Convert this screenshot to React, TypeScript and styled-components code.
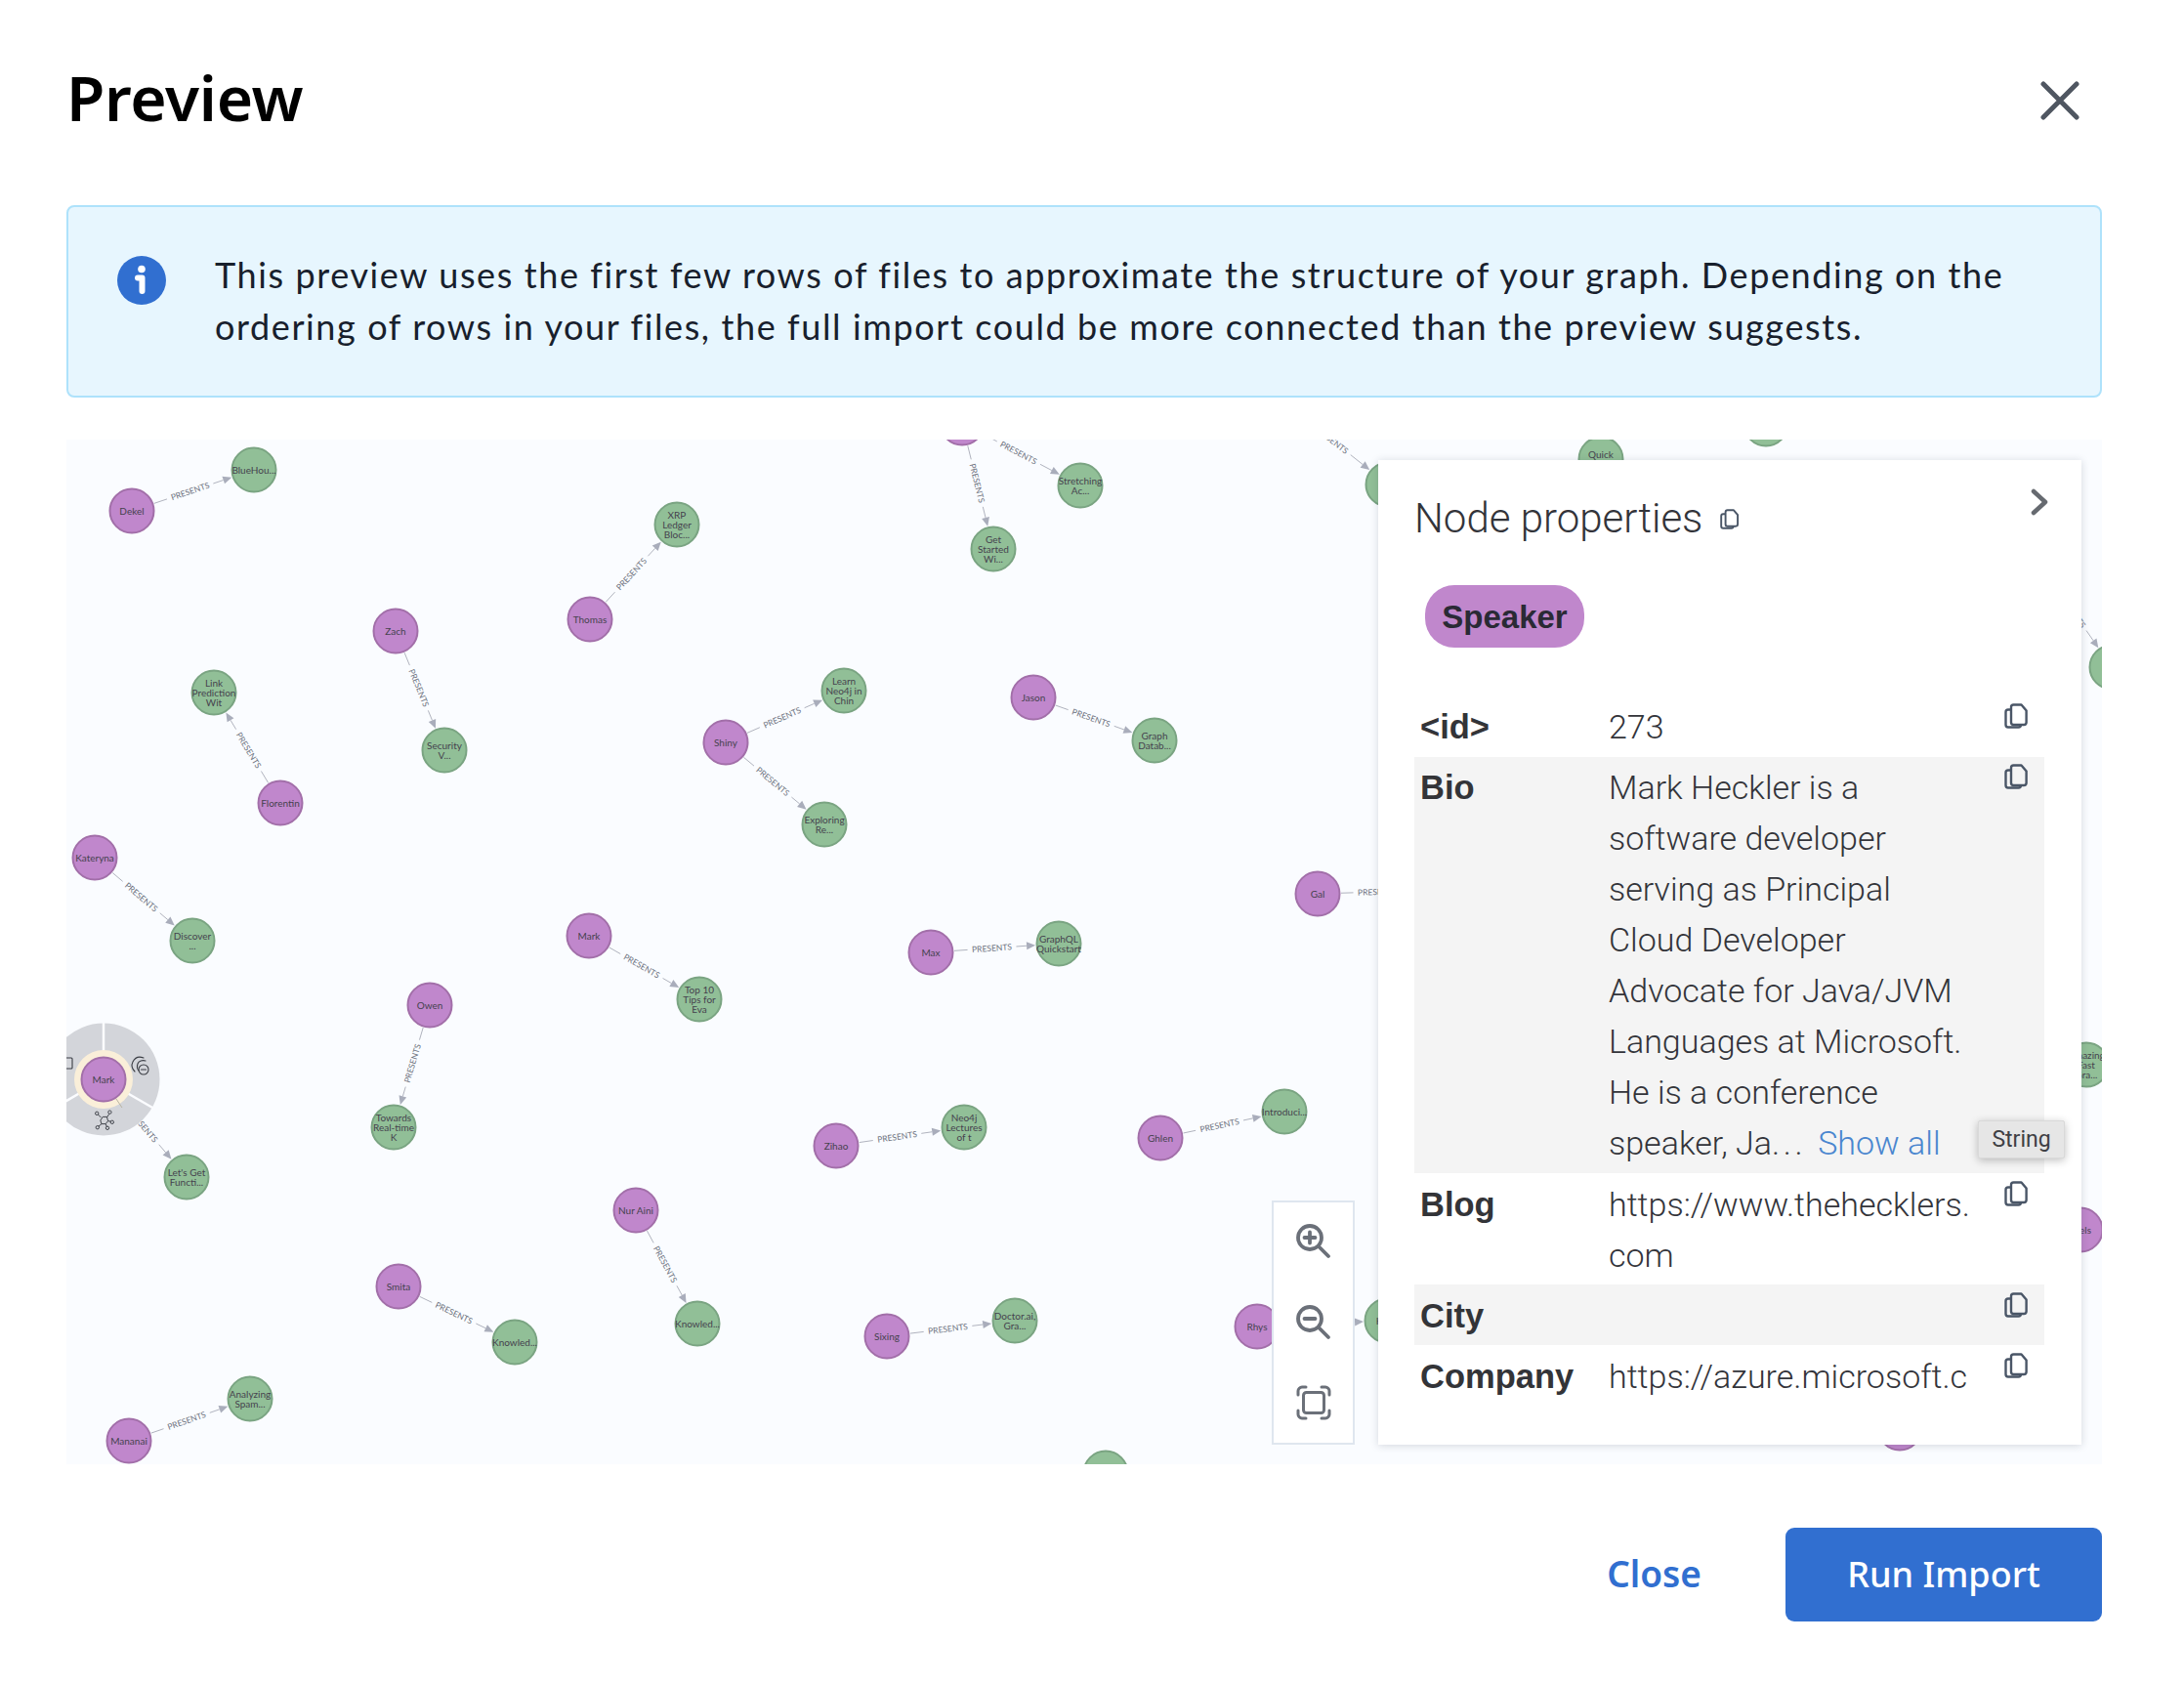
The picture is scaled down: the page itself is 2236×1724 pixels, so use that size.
import React from "react";
import styled, { createGlobalStyle } from "styled-components";

type Kind = "speaker" | "talk";

interface GraphNode {
  x: number;
  y: number;
  kind: Kind;
  lines: string[];
}

// positions are page pixels, the svg viewBox starts at the canvas corner
const NODES: Record<string, GraphNode> = {
  dekel: { x: 135, y: 523, kind: "speaker", lines: ["Dekel"] },
  bluehou: { x: 260, y: 481, kind: "talk", lines: ["BlueHou..."] },
  thomas: { x: 604, y: 634, kind: "speaker", lines: ["Thomas"] },
  xrp: { x: 693, y: 537, kind: "talk", lines: ["XRP", "Ledger", "Bloc..."] },
  zach: { x: 405, y: 646, kind: "speaker", lines: ["Zach"] },
  security: { x: 455, y: 768, kind: "talk", lines: ["Security", "V..."] },
  florentin: { x: 287, y: 822, kind: "speaker", lines: ["Florentin"] },
  link: { x: 219, y: 709, kind: "talk", lines: ["Link", "Prediction", "Wit"] },
  kateryna: { x: 97, y: 878, kind: "speaker", lines: ["Kateryna"] },
  discover: { x: 197, y: 963, kind: "talk", lines: ["Discover", "..."] },
  shiny: { x: 743, y: 760, kind: "speaker", lines: ["Shiny"] },
  learn: { x: 864, y: 707, kind: "talk", lines: ["Learn", "Neo4j in", "Chin"] },
  exploring: { x: 844, y: 844, kind: "talk", lines: ["Exploring", "Re..."] },
  jason: { x: 1058, y: 714, kind: "speaker", lines: ["Jason"] },
  graph: { x: 1182, y: 758, kind: "talk", lines: ["Graph", "Datab..."] },
  topSpeaker: { x: 985, y: 433, kind: "speaker", lines: [] },
  stretching: { x: 1106, y: 497, kind: "talk", lines: ["Stretching", "Ac..."] },
  started: { x: 1017, y: 562, kind: "talk", lines: ["Get", "Started", "Wi..."] },
  gal: { x: 1349, y: 915, kind: "speaker", lines: ["Gal"] },
  galTalk: { x: 1478, y: 911, kind: "talk", lines: [] },
  max: { x: 953, y: 975, kind: "speaker", lines: ["Max"] },
  graphql: { x: 1084, y: 966, kind: "talk", lines: ["GraphQL", "Quickstart"] },
  mark: { x: 603, y: 958, kind: "speaker", lines: ["Mark"] },
  top10: { x: 716, y: 1023, kind: "talk", lines: ["Top 10", "Tips for", "Eva"] },
  owen: { x: 440, y: 1029, kind: "speaker", lines: ["Owen"] },
  towards: { x: 403, y: 1154, kind: "talk", lines: ["Towards", "Real-time", "K"] },
  functional: { x: 191, y: 1205, kind: "talk", lines: ["Let's Get", "Functi..."] },
  zihao: { x: 856, y: 1173, kind: "speaker", lines: ["Zihao"] },
  lectures: { x: 987, y: 1154, kind: "talk", lines: ["Neo4j", "Lectures", "of t"] },
  ghlen: { x: 1188, y: 1165, kind: "speaker", lines: ["Ghlen"] },
  introduci: { x: 1315, y: 1138, kind: "talk", lines: ["Introduci..."] },
  nurAini: { x: 651, y: 1239, kind: "speaker", lines: ["Nur Aini"] },
  knowledA: { x: 714, y: 1355, kind: "talk", lines: ["Knowled..."] },
  smita: { x: 408, y: 1317, kind: "speaker", lines: ["Smita"] },
  knowledB: { x: 527, y: 1374, kind: "talk", lines: ["Knowled..."] },
  sixing: { x: 908, y: 1368, kind: "speaker", lines: ["Sixing"] },
  doctor: { x: 1039, y: 1352, kind: "talk", lines: ["Doctor.ai,", "Gra..."] },
  mananai: { x: 132, y: 1475, kind: "speaker", lines: ["Mananai"] },
  analyzing: { x: 256, y: 1432, kind: "talk", lines: ["Analyzing", "Spam..."] },
  rhys: { x: 1287, y: 1358, kind: "speaker", lines: ["Rhys"] },
  hidden: { x: 1420, y: 1352, kind: "talk", lines: ["Hid..."] },
  hyperSource: { x: 1310, y: 408, kind: "speaker", lines: [] },
  hyper: { x: 1421, y: 496, kind: "talk", lines: ["Hy..."] },
  quick: { x: 1639, y: 470, kind: "talk", lines: ["Quick", "Tour"] },
  topTalk: { x: 1808, y: 434, kind: "talk", lines: [] },
  rightSource: { x: 2085, y: 572, kind: "speaker", lines: [] },
  rightTalk: { x: 2162, y: 683, kind: "talk", lines: ["Intro"] },
  amazing: { x: 2136, y: 1090, kind: "talk", lines: ["Amazing", "Fast", "Gra..."] },
  niels: { x: 2130, y: 1259, kind: "speaker", lines: ["Niels"] },
  bottomTalk: { x: 1132, y: 1508, kind: "talk", lines: [] },
  bottomSpeaker: { x: 1945, y: 1462, kind: "speaker", lines: [] },
};

const EDGES: [string, string][] = [
  ["dekel", "bluehou"],
  ["thomas", "xrp"],
  ["zach", "security"],
  ["florentin", "link"],
  ["kateryna", "discover"],
  ["shiny", "learn"],
  ["shiny", "exploring"],
  ["jason", "graph"],
  ["topSpeaker", "stretching"],
  ["topSpeaker", "started"],
  ["gal", "galTalk"],
  ["max", "graphql"],
  ["mark", "top10"],
  ["owen", "towards"],
  ["zihao", "lectures"],
  ["ghlen", "introduci"],
  ["nurAini", "knowledA"],
  ["smita", "knowledB"],
  ["sixing", "doctor"],
  ["mananai", "analyzing"],
  ["rhys", "hidden"],
  ["hyperSource", "hyper"],
  ["rightSource", "rightTalk"],
];

const SELECTED = { x: 106, y: 1105 };
const SELECTED_TALK = NODES.functional;

const Relationship: React.FC<{ from: { x: number; y: number }; to: { x: number; y: number } }> = ({ from, to }) => {
  const dx = to.x - from.x;
  const dy = to.y - from.y;
  const len = Math.hypot(dx, dy);
  const ux = dx / len;
  const uy = dy / len;
  const sx = from.x + ux * 24;
  const sy = from.y + uy * 24;
  const tx = to.x - ux * 24;
  const ty = to.y - uy * 24;
  const ax = tx - ux * 9;
  const ay = ty - uy * 9;
  const mx = (sx + ax) / 2 + ux * 1.5;
  const my = (sy + ay) / 2 + uy * 1.5;
  const gap = 25;
  let angle = (Math.atan2(dy, dx) * 180) / Math.PI;
  if (angle > 90) angle -= 180;
  if (angle < -90) angle += 180;

  return (
    <g>
      <EdgeLine x1={sx} y1={sy} x2={mx - ux * gap} y2={my - uy * gap} />
      <EdgeLine x1={mx + ux * gap} y1={my + uy * gap} x2={ax} y2={ay} />
      <EdgeArrow
        points={`${tx},${ty} ${ax - uy * 4},${ay + ux * 4} ${ax + uy * 4},${ay - ux * 4}`}
      />
      <EdgeLabel x={mx} y={my} transform={`rotate(${angle} ${mx} ${my})`}>
        PRESENTS
      </EdgeLabel>
    </g>
  );
};

const Node: React.FC<{ node: GraphNode }> = ({ node }) => {
  const first = node.y - ((node.lines.length - 1) * 9.6) / 2;
  return (
    <g>
      <NodeCircle $kind={node.kind} cx={node.x} cy={node.y} r={22.5} />
      <NodeLabel>
        {node.lines.map((line, i) => (
          <tspan key={i} x={node.x} y={first + i * 9.6}>
            {line}
          </tspan>
        ))}
      </NodeLabel>
    </g>
  );
};

const SelectedMenu: React.FC = () => {
  const { x, y } = SELECTED;
  const spokes = [-90, 30, 150];
  return (
    <g>
      <circle cx={x} cy={y} r={57.5} fill="#d3d5da" />
      {spokes.map((deg) => {
        const rad = (deg * Math.PI) / 180;
        return (
          <line
            key={deg}
            x1={x + Math.cos(rad) * 28}
            y1={y + Math.sin(rad) * 28}
            x2={x + Math.cos(rad) * 59}
            y2={y + Math.sin(rad) * 59}
            stroke="#fbfcff"
            strokeWidth={2.5}
          />
        );
      })}
      <circle cx={x} cy={y} r={30} fill="#faefd9" />
      <line x1={x + 13} y1={y + 20} x2={x + 19} y2={y + 29} stroke="#b9b4a2" strokeWidth={1} />
      <Node node={{ x, y, kind: "speaker", lines: ["Mark"] }} />
      {/* dismiss */}
      <g fill="none" stroke="#3a3d44" strokeWidth={1.1} strokeLinecap="round">
        <path d="M147 1083c-5-2-9 0-11 4s-1 7 2 10" />
        <path d="M149 1086c-3-1-7 0-8 3s-1 5 1 7" />
        <circle cx={147} cy={1095} r={5} />
        <path d="M144.500 1095h5" />
      </g>
      {/* expand */}
      <g fill="none" stroke="#3a3d44" strokeWidth={1.6} transform="translate(107 1147) scale(0.6) translate(-109 -1146)">
        <path d="M106 1140l7 0 2 7-4 5-7 0-2-6z" />
        <path d="M103 1141l-5-5M113 1141l4-6M115 1147l5 1M111 1152l2 5M104 1152l-5 4" />
        <circle cx={96} cy={1134} r={2.8} />
        <circle cx={118} cy={1132} r={2.8} />
        <circle cx={122} cy={1149} r={2.8} />
        <circle cx={114} cy={1159} r={2.8} />
        <circle cx={97} cy={1158} r={2.8} />
      </g>
      {/* lock */}
      <rect x={66} y={1083} width={8} height={11} rx={1} fill="none" stroke="#3a3d44" strokeWidth={1.1} />
    </g>
  );
};

const CopyGlyph: React.FC = () => (
  <CopyIcon viewBox="0 0 25 26" fill="none" stroke="currentColor" strokeWidth={2.4} strokeLinejoin="round">
    <path d="M7 6.5V19.500c0 1.600 1 2.500 2.500 2.500H20c1.600 0 2.600-1 2.600-2.500V7.500L17.500 1.500H9.500C8 1.500 7 2.500 7 4z" />
    <path d="M7 6.500H4C2.500 6.500 1.500 7.500 1.500 9v13c0 1.500 1 2.500 2.500 2.500h10.500c1.500 0 2.500-1 2.500-2.500" />
  </CopyIcon>
);

const ROWS = [
  { key: "<id>", value: ["273"] },
  {
    key: "Bio",
    value: [
      "Mark Heckler is a",
      "software developer",
      "serving as Principal",
      "Cloud Developer",
      "Advocate for Java/JVM",
      "Languages at Microsoft.",
      "He is a conference",
    ],
    more: true,
  },
  { key: "Blog", value: ["https://www.thehecklers.", "com"] },
  { key: "City", value: [""] },
  { key: "Company", value: ["https://azure.microsoft.c"] },
];

const App: React.FC = () => {
  return (
    <>
      <GlobalStyle />
      <Modal>
        <Header>
          <Title>Preview</Title>
          <CloseIcon type="button" aria-label="Close">
            <svg width="40" height="40" viewBox="0 0 40 40" fill="none" stroke="#4f5661" strokeWidth={5} strokeLinecap="round">
              <path d="M3 3l34 34M37 3L3 37" />
            </svg>
          </CloseIcon>
        </Header>

        <Banner>
          <svg width="50" height="50" viewBox="0 0 50 50">
            <circle cx="25" cy="25" r="25" fill="#316fd0" />
            <circle cx="25" cy="13.500" r="3.800" fill="#fff" />
            <path d="M21 22.500h4.500v13.500" fill="none" stroke="#fff" strokeWidth={6} strokeLinecap="round" strokeLinejoin="round" />
          </svg>
          <BannerText>
            This preview uses the first few rows of files to approximate the structure of your graph. Depending on the
            <br />
            ordering of rows in your files, the full import could be more connected than the preview suggests.
          </BannerText>
        </Banner>

        <Canvas>
          <GraphSvg viewBox="68 450 2084 1049" width="2084" height="1049">
            {EDGES.map(([a, b]) => (
              <Relationship key={a + b} from={NODES[a]} to={NODES[b]} />
            ))}
            <Relationship from={SELECTED} to={SELECTED_TALK} />
            {Object.entries(NODES).map(([id, node]) => (
              <Node key={id} node={node} />
            ))}
            <SelectedMenu />
          </GraphSvg>

          <ZoomBar>
            <svg width="36" height="36" viewBox="0 0 36 36" fill="none" stroke="#6b7079" strokeWidth={3.8} strokeLinecap="round">
              <circle cx="14" cy="14" r="12" />
              <path d="M14 8.500v11M8.500 14h11M23 23l10 10" />
            </svg>
            <svg width="36" height="36" viewBox="0 0 36 36" fill="none" stroke="#6b7079" strokeWidth={3.8} strokeLinecap="round">
              <circle cx="14" cy="14" r="12" />
              <path d="M8.500 14h11M23 23l10 10" />
            </svg>
            <svg width="36" height="36" viewBox="0 0 36 36" fill="none" stroke="#6b7079" strokeWidth={3} strokeLinecap="round">
              <rect x="7.500" y="7.500" width="21" height="21" rx="3" />
              <path d="M2 10V6c0-2 2-4 4-4h4M26 2h4c2 0 4 2 4 4v4M34 26v4c0 2-2 4-4 4h-4M10 34H6c-2 0-4-2-4-4v-4" />
            </svg>
          </ZoomBar>

          <Panel>
            <PanelHeader>
              <PanelTitle>Node properties</PanelTitle>
              <TitleCopy>
                <CopyGlyph />
              </TitleCopy>
              <Chevron viewBox="0 0 18 28" fill="none" stroke="#666a70" strokeWidth={4.500} strokeLinecap="round" strokeLinejoin="round">
                <path d="M3 3l12 11L3 25" />
              </Chevron>
            </PanelHeader>
            <Chip>Speaker</Chip>
            <PropertyTable>
              {ROWS.map((row, index) => (
                <PropertyRow key={row.key} $shaded={index % 2 === 1}>
                  <PropertyKey>{row.key}</PropertyKey>
                  <PropertyValue>
                    {row.value.map((line, i) => (
                      <div key={i}>{line || "\u00a0"}</div>
                    ))}
                    {row.more && (
                      <div>
                        speaker, Ja<Dots>...</Dots>
                        <ShowAll>Show all</ShowAll>
                      </div>
                    )}
                  </PropertyValue>
                  <RowCopy>
                    <CopyGlyph />
                  </RowCopy>
                </PropertyRow>
              ))}
            </PropertyTable>
            <TypeTip>String</TypeTip>
          </Panel>
        </Canvas>

        <Footer>
          <TextButton type="button">Close</TextButton>
          <PrimaryButton type="button">Run Import</PrimaryButton>
        </Footer>
      </Modal>
    </>
  );
};

export default App;

const GlobalStyle = createGlobalStyle`
  html, body {
    margin: 0;
    padding: 0;
    background: #ffffff;
  }
  body {
    font-family: "Lato", "Noto Sans", sans-serif;
  }
`;

const Modal = styled.div`
  width: 2236px;
  height: 1724px;
  box-sizing: border-box;
  padding: 0 84px 0 68px;
  display: flex;
  flex-direction: column;
  overflow: hidden;
`;

const Header = styled.header`
  height: 210px;
  display: flex;
  align-items: flex-start;
  justify-content: space-between;
`;

const Title = styled.h1`
  margin: 56px 0 0;
  font-family: "Noto Sans", sans-serif;
  font-size: 64px;
  line-height: 88px;
  font-weight: 600;
  color: #000000;
  letter-spacing: -0.3px;
`;

const CloseIcon = styled.button`
  margin: 83px 23px 0 0;
  padding: 0;
  border: none;
  background: transparent;
  line-height: 0;
`;

const Banner = styled.section`
  box-sizing: border-box;
  height: 197px;
  display: flex;
  align-items: flex-start;
  gap: 50px;
  padding: 50px 0 0 50px;
  background: #e7f6fe;
  border: 2px solid #aee2fb;
  border-radius: 8px;
`;

const BannerText = styled.p`
  margin: -7px 0 0;
  font-family: "Lato", sans-serif;
  font-size: 36px;
  line-height: 53px;
  color: #18202c;
  white-space: nowrap;
  letter-spacing: 1.6px;
`;

const Canvas = styled.div`
  position: relative;
  margin-top: 43px;
  height: 1049px;
  background: #fafcff;
  overflow: hidden;
`;

const GraphSvg = styled.svg`
  display: block;
`;

const EdgeLine = styled.line`
  stroke: #b0b3be;
  stroke-width: 1;
`;

const EdgeArrow = styled.polygon`
  fill: #a9adbb;
`;

const EdgeLabel = styled.text`
  font-family: "Lato", sans-serif;
  font-size: 8.5px;
  fill: #6d727e;
  text-anchor: middle;
  dominant-baseline: central;
`;

const NodeCircle = styled.circle<{ $kind: Kind }>`
  fill: ${(p) => (p.$kind === "speaker" ? "#c087cc" : "#91bf97")};
  stroke: ${(p) => (p.$kind === "speaker" ? "#a26fa9" : "#7aa482")};
  stroke-width: 2;
`;

const NodeLabel = styled.text`
  font-family: "Lato", sans-serif;
  font-size: 10px;
  fill: #45424e;
  text-anchor: middle;
  dominant-baseline: central;
`;

const ZoomBar = styled.div`
  position: absolute;
  left: 1234px;
  top: 779px;
  box-sizing: border-box;
  width: 85px;
  height: 250px;
  padding: 22px 0 23px;
  display: flex;
  flex-direction: column;
  align-items: center;
  justify-content: space-between;
  background: #ffffff;
  border: 2px solid #dfe6ef;
`;

const Panel = styled.aside`
  position: absolute;
  left: 1343px;
  top: 21px;
  box-sizing: border-box;
  width: 720px;
  height: 1008px;
  padding: 0 38px 0 37px;
  background: #ffffff;
  box-shadow: 0 1px 8px rgba(40, 50, 70, 0.18);
  color: #34353a;
`;

const PanelHeader = styled.div`
  position: relative;
  box-sizing: border-box;
  height: 118px;
  padding-top: 2px;
  display: flex;
  align-items: center;
`;

const PanelTitle = styled.h2`
  margin: 0;
  font-family: "Roboto", sans-serif;
  font-size: 42px;
  line-height: 48px;
  font-weight: 300;
  color: #33343a;
`;

const TitleCopy = styled.span`
  margin-left: 18px;
  width: 20px;
  height: 23px;
  color: #4a5667;
  display: block;
  line-height: 0;
`;

const Chevron = styled.svg`
  position: absolute;
  right: -4px;
  top: 29px;
  width: 18px;
  height: 28px;
`;

const Chip = styled.div`
  display: inline-flex;
  align-items: center;
  justify-content: center;
  box-sizing: border-box;
  margin: 10px 0 0 11px;
  padding-top: 2px;
  width: 163px;
  height: 64px;
  border-radius: 30px;
  background: #c087cc;
  font-family: "Liberation Sans", sans-serif;
  font-size: 33px;
  font-weight: 700;
  color: #2a2a35;
`;

const PropertyTable = styled.div`
  margin-top: 50px;
`;

const PropertyRow = styled.div<{ $shaded: boolean }>`
  display: grid;
  grid-template-columns: 193px 1fr 41px;
  padding: 5px 0 5px 6px;
  background: ${(p) => (p.$shaded ? "#f4f4f4" : "transparent")};

  &:nth-child(n + 3) {
    padding: 6px 0 4px 6px;
  }
`;

const PropertyKey = styled.div`
  font-family: "Liberation Sans", sans-serif;
  font-size: 34.5px;
  line-height: 52px;
  font-weight: 700;
  color: #333438;
`;

const PropertyValue = styled.div`
  font-family: "Roboto", sans-serif;
  font-size: 34px;
  line-height: 52px;
  font-weight: 300;
  color: #33343a;
  white-space: nowrap;
`;

const Dots = styled.span`
  letter-spacing: 3.6px;
  margin-right: 12px;
`;

const ShowAll = styled.span`
  color: #4a86cf;
`;

const RowCopy = styled.span`
  display: block;
  width: 25px;
  height: 26px;
  margin-top: 2px;
  color: #4a5667;
  line-height: 0;
`;

const CopyIcon = styled.svg`
  width: 100%;
  height: 100%;
  display: block;
`;

const TypeTip = styled.div`
  position: absolute;
  left: 614px;
  top: 676px;
  box-sizing: border-box;
  width: 89px;
  height: 39px;
  display: flex;
  align-items: center;
  justify-content: center;
  background: #e6e6e6;
  border: 1px solid #d9d9d9;
  border-radius: 2px;
  box-shadow: 0 2px 8px rgba(0, 0, 0, 0.25);
  font-family: "Roboto", sans-serif;
  font-size: 23px;
  color: #3f4044;
`;

const Footer = styled.footer`
  margin-top: 65px;
  display: flex;
  justify-content: flex-end;
  align-items: center;
  gap: 86px;
`;

const TextButton = styled.button`
  padding: 0 0 3px;
  border: none;
  background: transparent;
  font-family: "Noto Sans", sans-serif;
  font-size: 37px;
  font-weight: 600;
  color: #316fd0;
`;

const PrimaryButton = styled.button`
  width: 324px;
  height: 96px;
  padding: 0 0 2px;
  border: none;
  border-radius: 9px;
  background: #316fd0;
  font-family: "Noto Sans", sans-serif;
  font-size: 36px;
  font-weight: 500;
  color: #ffffff;
`;
